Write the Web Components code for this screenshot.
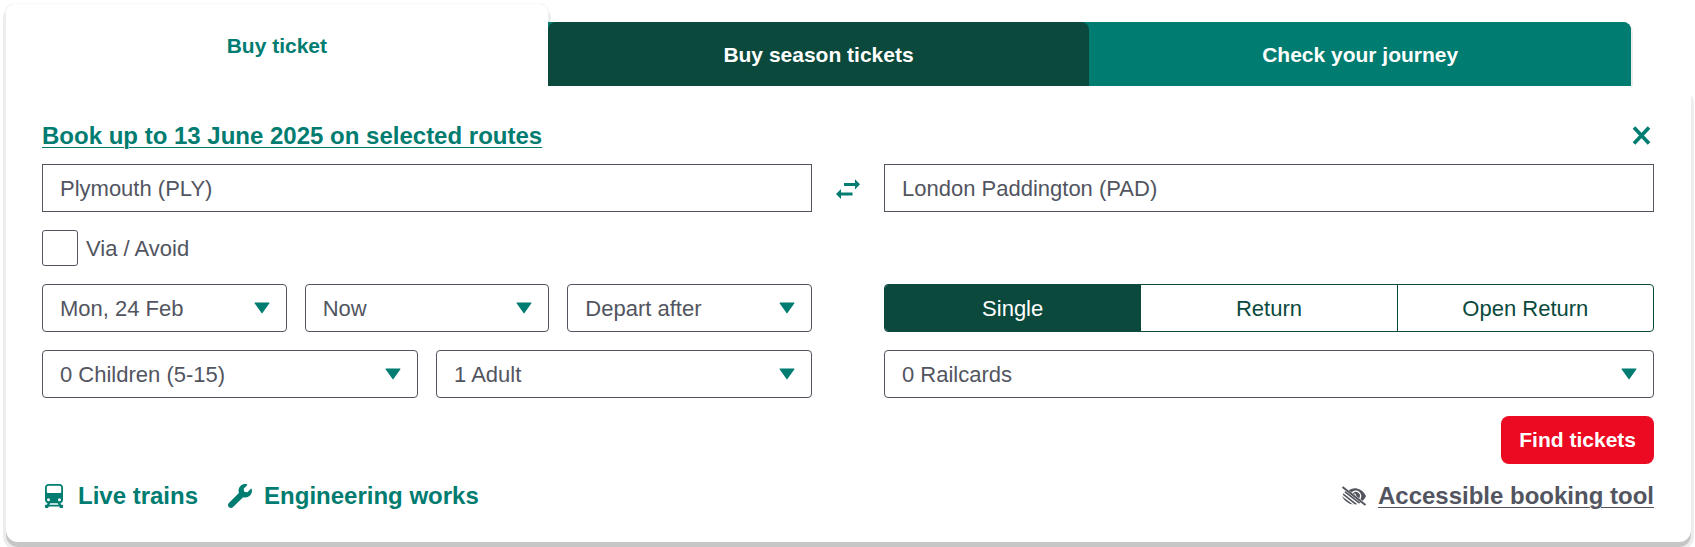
<!DOCTYPE html>
<html lang="en">
<head>
<meta charset="utf-8">
<meta name="viewport" content="width=device-width, initial-scale=1">
<title>Buy train tickets</title>
<style>
  :root {
    --teal: #007c70;
    --dark: #0b493d;
    --grey: #52555f;
    --red: #eb0a21;
  }
  body {
    margin: 0;
    padding: 4px 4px 5px 6px;
    background: #fff;
    color: var(--grey);
    font: 22px/28px "Liberation Sans", Arial, sans-serif;
  }
</style>
</head>
<body>
<ticket-planner></ticket-planner>

<script>
const define = (name, html, setup) => {
  const template = document.createElement('template');
  template.innerHTML = html;
  customElements.define(name, class extends HTMLElement {
    constructor() {
      super();
      this.attachShadow({ mode: 'open' }).append(template.content.cloneNode(true));
    }
    connectedCallback() {
      if (setup && !this.ready) setup(this, this.shadowRoot);
      this.ready = true;
    }
  });
};

const icons = {
  close: `<path d="M4 3.500 19 19.500M19 3.500 4 19.500" fill="none" stroke="currentColor" stroke-width="3.600"/>`,
  swap: `<path d="M8 6.900h11V3.200l5 5.100-5 5.100V9.900H8zM16.500 19.500H5v3.600L0 18l5-5.100v3.600h11.500z"/>`,
  train: `<path fill-rule="evenodd" d="M7 0H17a4 4 0 0 1 4 4V16a3.500 3.500 0 0 1-2.600 3.400l.8 1.300H20.500a.5.500 0 0 1 .5.500V22l-.2 1.900H18l-.8-1.300H6.800L6 23.900H3.200L3 22v-.8a.5.500 0 0 1 .5-.5H4.800l.8-1.300A3.500 3.500 0 0 1 3 16V4a4 4 0 0 1 4-4zM6.500 1.700A1.700 1.700 0 0 0 4.800 3.400V8.300a.7.700 0 0 0 .7.700H18.500a.7.700 0 0 0 .7-.7V3.400a1.700 1.700 0 0 0-1.700-1.700zM6.500 14.200a1.500 1.500 0 1 0 0 3 1.500 1.500 0 1 0 0-3zM17.500 14.200a1.500 1.500 0 1 0 0 3 1.500 1.500 0 1 0 0-3zM8.300 19.200l-.9 1.500h9.200l-.9-1.500z"/>`,
  wrench: `<path transform="scale(.046875)" d="M507.730 109.100c-2.240-9.030-13.540-12.090-20.120-5.510l-74.360 74.360-67.880-11.310-11.310-67.880 74.360-74.360c6.620-6.620 3.430-17.900-5.660-20.160-47.380-11.740-99.550.910-136.580 37.930-39.640 39.640-50.550 97.100-34.050 147.200L18.740 402.760c-24.990 24.990-24.990 65.510 0 90.500 24.990 24.990 65.510 24.990 90.500 0l213.210-213.210c50.120 16.710 107.470 5.680 147.370-34.220 37.070-37.070 49.700-89.320 37.910-136.730z"/>`,
  eye: `<clipPath id="upper"><path d="M3 3.500 24 19.500V0H3z"/></clipPath>
    <clipPath id="lower"><path d="M0 12C2 8 4 6.500 5 5.500L20 18C17 20 14 20.500 12 20.500 7 20.500 2 17 0 12z"/></clipPath>
    <g clip-path="url(#upper)"><path d="M5 7.500C9 4 13 4 15 4.500 19 5.200 22 8 24 12 23 14.500 21.500 16 20 17.500z"/>
    <path d="M10 9A4.700 4.700 0 1 1 17.500 15" fill="none" stroke="#fff" stroke-width="1.500"/>
    <path d="M12.500 9.500 14 12" stroke="#fff" stroke-width="1.200"/></g>
    <g clip-path="url(#lower)" fill="none" stroke="currentColor" stroke-width="1.700"><path d="M0 5.500 22 22.500M-1 8.500 20 25M-1 12.500 16 25.500"/></g>
    <path d="M.5 3 23.500 21" fill="none" stroke="currentColor" stroke-width="2"/>`
};

/* <app-icon name="…">: one glyph from the set above */
define('app-icon', `
  <style>
    :host { display: block; flex: none; width: 24px; height: 24px; }
    svg { display: block; width: 100%; height: 100%; fill: currentColor; overflow: visible; }
  </style>
  <svg viewBox="0 0 24 24" aria-hidden="true"></svg>`,
  (el, root) => { root.querySelector('svg').innerHTML = icons[el.getAttribute('name')]; });

/* <planner-tab>: tab heading; "current" and "dark" pick its look */
define('planner-tab', `
  <style>
    :host { display: flex; flex: 1; }
    button {
      flex: 1; border: 0; padding: 19px 18px 17px; color: #fff; background: var(--teal);
      font: bold 21px/28px "Liberation Sans", Arial, sans-serif;
      border-radius: 8px 8px 0 0; cursor: pointer;
    }
    :host([dark]) button { background: var(--dark); }
    :host([current]) button {
      color: var(--teal); background: #fff; padding: 28px 18px 26px;
      box-shadow: 0 6px 0 3px #ededed, 0 0 1px #ccc;
    }
  </style>
  <button type="button" role="tab"><slot></slot></button>`,
  (el, root) => root.querySelector('button').setAttribute('aria-selected', el.hasAttribute('current')));

/* <station-field label value>: text box for a station name */
define('station-field', `
  <style>
    :host { display: block; }
    input {
      display: block; box-sizing: border-box; width: 100%; height: 48px; margin: 0;
      padding: 2px 17px 0; border: 1px solid var(--grey); border-radius: 0;
      background: #fff; color: inherit; font: inherit;
    }
  </style>
  <input type="text">`,
  (el, root) => {
    const input = root.querySelector('input');
    input.value = el.getAttribute('value');
    input.setAttribute('aria-label', el.getAttribute('label'));
  });

/* <select-field label options="a|b">: drop-down with a solid arrow */
define('select-field', `
  <style>
    :host { display: grid; flex: 1; min-width: 0; align-items: center; }
    select, svg { grid-area: 1 / 1; }
    select {
      appearance: none; box-sizing: border-box; width: 100%; height: 48px; margin: 0;
      padding: 2px 48px 0 17px; border: 1px solid var(--grey); border-radius: 4px;
      background: #fff; color: inherit; font: inherit;
    }
    svg { justify-self: end; width: 16px; height: 12px; margin-right: 17px; fill: var(--teal); pointer-events: none; }
  </style>
  <select></select>
  <svg viewBox="0 0 16 12" aria-hidden="true"><path d="M1 .5H15a.5.500 0 0 1 .4.800L8.500 11a.6.600 0 0 1-1 0L.6 1.300A.5.500 0 0 1 1 .5z"/></svg>`,
  (el, root) => {
    const select = root.querySelector('select');
    select.setAttribute('aria-label', el.getAttribute('label'));
    el.getAttribute('options').split('|').forEach(text => select.add(new Option(text)));
  });

/* <check-field>: large tick box with its label */
define('check-field', `
  <style>
    :host { display: block; }
    label { display: flex; align-items: center; gap: 8px; }
    input {
      appearance: none; box-sizing: border-box; width: 36px; height: 36px; margin: 0;
      border: 1px solid var(--grey); border-radius: 3px; background: #fff;
    }
    input:checked { background: var(--teal); }
    span { padding-top: 2px; }
  </style>
  <label><input type="checkbox"><span><slot></slot></span></label>`);

/* <journey-type>: segmented set of radio buttons */
define('journey-type', `
  <style>
    :host { display: block; }
    div {
      display: flex; box-sizing: border-box; height: 48px; overflow: hidden;
      border: 1px solid var(--dark); border-radius: 4px; color: var(--dark);
    }
    label { display: grid; flex: 1; place-items: center; cursor: pointer; }
    label + label { border-left: 1px solid var(--dark); }
    label:has(:checked) { background: var(--dark); color: #fff; }
    input, span { grid-area: 1 / 1; }
    input { appearance: none; width: 100%; height: 100%; margin: 0; }
    span { padding-top: 2px; }
  </style>
  <div role="radiogroup" aria-label="Journey type">
    <label><input type="radio" name="type" checked><span>Single</span></label>
    <label><input type="radio" name="type"><span>Return</span></label>
    <label><input type="radio" name="type"><span>Open Return</span></label>
  </div>`);

/* <icon-link icon>: bold link, led by an icon when one is named */
define('icon-link', `
  <style>
    :host { display: block; color: var(--teal); }
    a { display: flex; align-items: center; gap: 12px; color: inherit; font-size: 24px; font-weight: bold; text-decoration: none; }
    :host([muted]) { color: var(--grey); }
    :host([underlined]) span { text-decoration: underline; text-decoration-thickness: 1px; text-underline-offset: 3px; }
  </style>
  <a href="#"><span><slot></slot></span></a>`,
  (el, root) => {
    if (!el.hasAttribute('icon')) return;
    const icon = document.createElement('app-icon');
    icon.setAttribute('name', el.getAttribute('icon'));
    root.querySelector('a').prepend(icon);
  });

define('icon-button', `
  <style>
    :host { display: block; }
    button { display: block; padding: 0; border: 0; background: none; color: var(--teal); cursor: pointer; }
  </style>
  <button type="button"><slot></slot></button>`,
  (el, root) => root.querySelector('button').setAttribute('aria-label', el.getAttribute('label')));

define('primary-button', `
  <style>
    :host { display: block; }
    button {
      display: block; padding: 10px 18px; border: 0; border-radius: 8px;
      background: var(--red); color: #fff; cursor: pointer;
      font: bold 21px/28px "Liberation Sans", Arial, sans-serif;
    }
  </style>
  <button type="submit"><slot></slot></button>`);

define('ticket-planner', `
  <style>
    :host { display: block; }
    .tabs { display: flex; align-items: flex-end; margin-right: 60px; }
    .others {
      display: flex; flex: 2; background: var(--teal);
      border-radius: 0 8px 0 0; box-shadow: 2px 2px 0 #ededed;
    }
    .panel {
      position: relative; padding: 36px 37px 32px 36px; background: #fff;
      border-radius: 0 12px 12px 12px;
      box-shadow: 0 5px 0 #c6c6c6, 0 6px 0 3px #ededed;
    }
    .head, .foot, .links, .row { display: flex; align-items: center; }
    .head, .foot { justify-content: space-between; }
    .head { margin-bottom: 14px; }
    .links { gap: 30px; }
    .row { gap: 18px; }
    .journey { display: grid; grid-template-columns: 1fr 24px 1fr; gap: 18px 24px; align-items: center; }
    .right { grid-column: 3; }
    .action { display: flex; justify-content: flex-end; padding: 18px 0; }
  </style>
  <div class="tabs" role="tablist">
    <planner-tab current>Buy ticket</planner-tab>
    <div class="others">
      <planner-tab dark>Buy season tickets</planner-tab>
      <planner-tab>Check your journey</planner-tab>
    </div>
  </div>
  <form class="panel">
    <div class="head">
      <icon-link underlined>Book up to 13 June 2025 on selected routes</icon-link>
      <icon-button label="Close"><app-icon name="close"></app-icon></icon-button>
    </div>
    <div class="journey">
      <station-field label="From" value="Plymouth (PLY)"></station-field>
      <icon-button label="Swap stations"><app-icon name="swap"></app-icon></icon-button>
      <station-field label="To" value="London Paddington (PAD)"></station-field>
      <check-field>Via / Avoid</check-field>
      <div class="right"></div>
      <div class="row">
        <select-field label="Date" options="Mon, 24 Feb|Tue, 25 Feb"></select-field>
        <select-field label="Time" options="Now|Later"></select-field>
        <select-field label="Depart or arrive" options="Depart after|Arrive before"></select-field>
      </div>
      <journey-type class="right"></journey-type>
      <div class="row">
        <select-field label="Children" options="0 Children (5-15)|1 Child (5-15)"></select-field>
        <select-field label="Adults" options="1 Adult|2 Adults"></select-field>
      </div>
      <select-field class="right" label="Railcards" options="0 Railcards|1 Railcard"></select-field>
    </div>
    <div class="action"><primary-button>Find tickets</primary-button></div>
    <div class="foot">
      <div class="links">
        <icon-link icon="train">Live trains</icon-link>
        <icon-link icon="wrench">Engineering works</icon-link>
      </div>
      <icon-link icon="eye" muted underlined>Accessible booking tool</icon-link>
    </div>
  </form>`);
</script>
</body>
</html>
